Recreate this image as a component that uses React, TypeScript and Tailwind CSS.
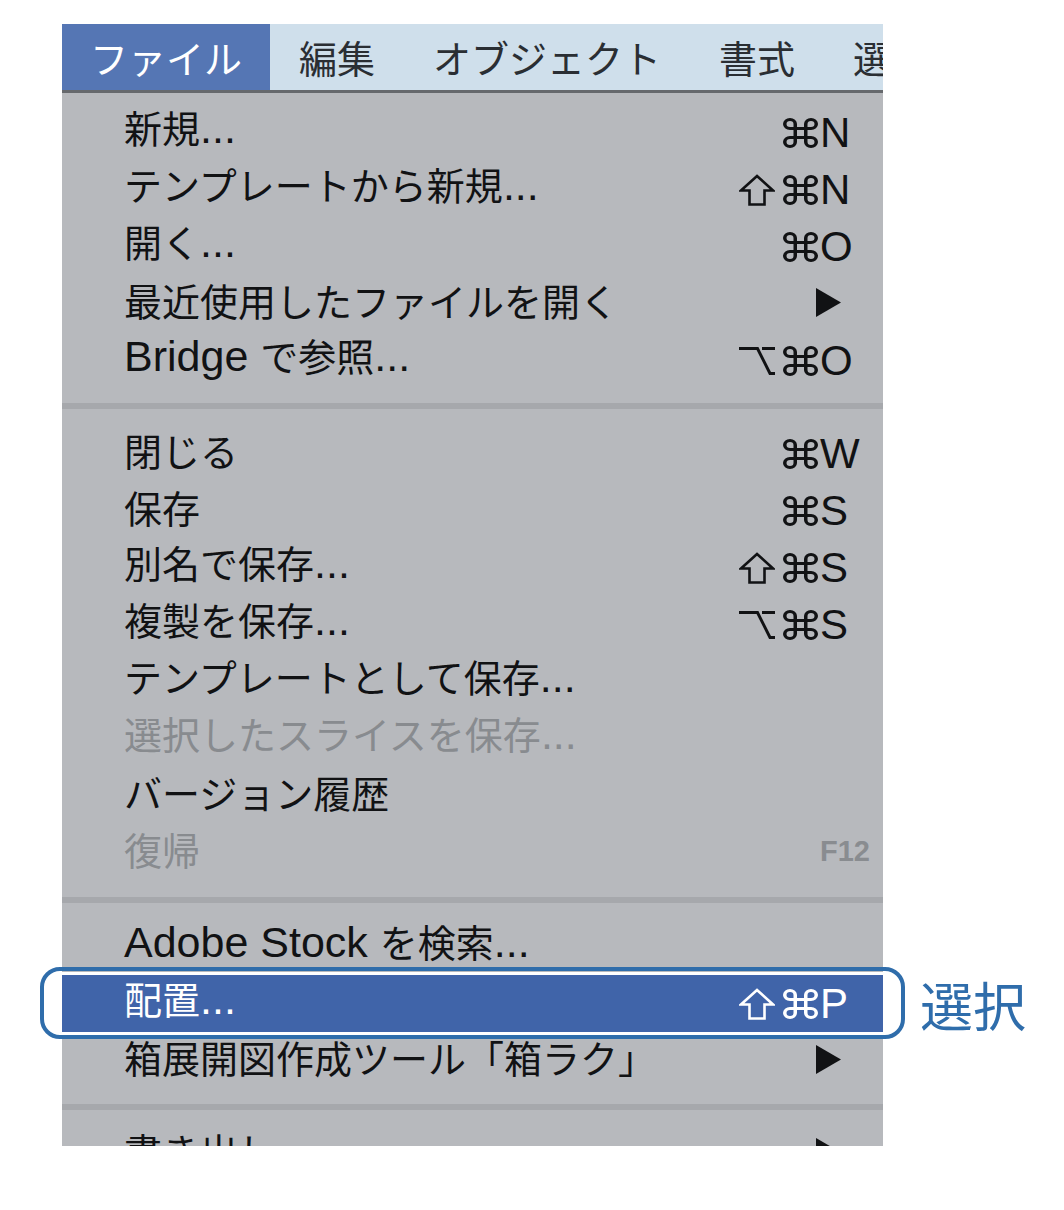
import React from "react";

type Item = {
  label: string;
  mods?: ("shift" | "opt" | "cmd")[];
  keyChar?: string;
  submenu?: boolean;
  disabled?: boolean;
  selected?: boolean;
  fkey?: string;
};

const groups: { items: Item[]; pt: string; pb: string; clip?: string }[] = [
  {
    pt: "pt-[11px]",
    pb: "pb-[14px]",
    items: [
      { label: "新規...", mods: ["cmd"], keyChar: "N" },
      { label: "テンプレートから新規...", mods: ["shift", "cmd"], keyChar: "N" },
      { label: "開く...", mods: ["cmd"], keyChar: "O" },
      { label: "最近使用したファイルを開く", submenu: true },
      { label: "Bridge で参照...", mods: ["opt", "cmd"], keyChar: "O" },
    ],
  },
  {
    pt: "pt-[16px]",
    pb: "pb-[16px]",
    items: [
      { label: "閉じる", mods: ["cmd"], keyChar: "W" },
      { label: "保存", mods: ["cmd"], keyChar: "S" },
      { label: "別名で保存...", mods: ["shift", "cmd"], keyChar: "S" },
      { label: "複製を保存...", mods: ["opt", "cmd"], keyChar: "S" },
      { label: "テンプレートとして保存..." },
      { label: "選択したスライスを保存...", disabled: true },
      { label: "バージョン履歴" },
      { label: "復帰", disabled: true, fkey: "F12" },
    ],
  },
  {
    pt: "pt-[15px]",
    pb: "pb-[15px]",
    items: [
      { label: "Adobe Stock を検索..." },
      { label: "配置...", mods: ["shift", "cmd"], keyChar: "P", selected: true },
      { label: "箱展開図作成ツール「箱ラク」", submenu: true },
    ],
  },
  {
    // the screenshot is cut off part way through this row
    pt: "pt-[15px]",
    pb: "pb-0",
    clip: "h-[36px] overflow-hidden",
    items: [{ label: "書き出し", submenu: true }],
  },
];

// mac key glyphs
function Cmd() {
  return (
    <svg width="35" height="30" viewBox="2 2 20 20" preserveAspectRatio="none" fill="none" stroke="currentColor" strokeWidth="2">
      <path d="M15 6v12a3 3 0 1 0 3-3H6a3 3 0 1 0 3 3V6a3 3 0 1 0-3 3h12a3 3 0 1 0-3-3" />
    </svg>
  );
}

function Shift() {
  return (
    <svg width="36" height="32" viewBox="0 0 36 32" fill="none" stroke="currentColor" strokeWidth="2.6">
      <path d="M18 2 L34 16.5 H25.5 V30.5 H10.5 V16.5 H2 Z" />
    </svg>
  );
}

function Opt() {
  return (
    <svg width="36" height="30" viewBox="0 0 36 30" fill="none" stroke="currentColor" strokeWidth="3">
      <path d="M0 2.5 H18.5 L31 27.5 H36 M23 2.5 H36" />
    </svg>
  );
}

function Arrow() {
  return (
    <svg width="27" height="29" viewBox="0 0 27 29" className="-ml-[5px] mt-[6px]">
      <path d="M1 0 L26 14.5 L1 29 Z" fill="currentColor" />
    </svg>
  );
}

function Label({ text }: { text: string }) {
  const parts = text.split(/([\x20-\x7E]+)/).filter(Boolean);
  return (
    <span className="min-w-0 flex-1 whitespace-nowrap leading-none">
      {parts.map((p, i) =>
        /^[\x20-\x7E]+$/.test(p) ? (
          <span key={i} className="font-['Liberation_Sans',sans-serif] text-[43px]">
            {p}
          </span>
        ) : (
          <span key={i} className="text-[38px]">
            {p}
          </span>
        )
      )}
    </span>
  );
}

function Row({ item }: { item: Item }) {
  const color = item.selected
    ? "text-white"
    : item.disabled
      ? "text-[#888b8f]"
      : "text-[#111214]";
  return (
    <div
      className={`relative flex h-[57px] items-center pb-[8px] pl-[62px] ${color} ${
        item.selected ? "bg-[#4064a9] outline-[3px] outline-solid outline-white" : ""
      }`}
    >
      <Label text={item.label} />
      <span className="mt-[8px] flex w-[100px] shrink-0 items-center justify-end gap-[8px]">
        {item.mods?.map((m) => (m === "cmd" ? <Cmd key={m} /> : m === "shift" ? <Shift key={m} /> : <Opt key={m} />))}
      </span>
      <span className="flex w-[65px] shrink-0 items-center pl-[2px] font-['Liberation_Sans',sans-serif] text-[42px] leading-none">
        {item.keyChar && <span className="mt-[8px]">{item.keyChar}</span>}
        {item.submenu && <Arrow />}
        {item.fkey && (
          <span className="mt-[6px] text-[29px] font-bold text-[#898c90]">{item.fkey}</span>
        )}
      </span>
      {item.selected && (
        <>
          <div className="pointer-events-none absolute -bottom-[7px] -left-[22px] -right-[22px] -top-[8px] rounded-[20px] border-[4px] border-[#2f6dab]" />
          <span className="absolute left-[858px] top-[3px] whitespace-nowrap text-[53px] leading-none text-[#2f6dab]">
            選択
          </span>
        </>
      )}
    </div>
  );
}

export default function App() {
  const menus = ["編集", "オブジェクト", "書式", "選択"];
  return (
    <div className="h-[1210px] w-[1064px] overflow-hidden bg-white font-['Noto_Sans_CJK_JP',sans-serif]">
      <div className="ml-[62px] mt-[24px] w-[821px] bg-[#b7b9bd]">
        <div className="flex h-[69px] overflow-hidden whitespace-nowrap border-b-[3px] border-[#66696d] bg-[#cfdfeb] text-[38px] leading-none">
          <div className="flex items-center bg-[#5576b4] px-[28px] text-white">ファイル</div>
          {menus.map((m) => (
            <div key={m} className="flex items-center px-[29px] text-[#2a2e33]">
              {m}
            </div>
          ))}
        </div>
        {groups.map((g, gi) => (
          <div key={gi}>
            {gi > 0 && <div className="h-[6px] bg-[#a6a8ac]" />}
            <div className={`${g.pt} ${g.pb} ${g.clip ?? ""}`}>
              {g.items.map((it) => (
                <Row key={it.label} item={it} />
              ))}
            </div>
          </div>
        ))}
      </div>
    </div>
  );
}
